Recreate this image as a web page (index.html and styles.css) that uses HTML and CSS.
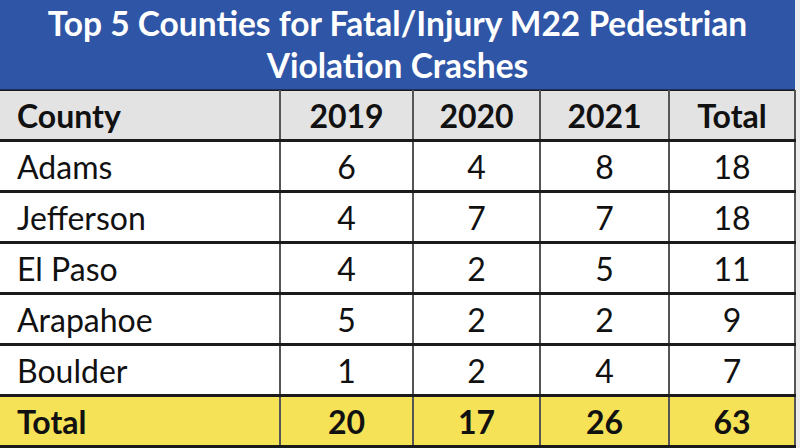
FILE: index.html
```html
<!DOCTYPE html>
<html>
<head>
<meta charset="utf-8">
<link rel="stylesheet" href="styles.css">
</head>
<body>
<div class="sheet">
  <div class="title">Top 5 Counties for Fatal/Injury M22 Pedestrian<br>Violation Crashes</div>
  <table class="grid">
    <colgroup>
      <col class="c-name"><col class="c-y1"><col class="c-y2"><col class="c-y3"><col class="c-tot">
    </colgroup>
    <thead>
      <tr class="head"><th class="name">County</th><th>2019</th><th>2020</th><th>2021</th><th>Total</th></tr>
    </thead>
    <tbody>
      <tr><td class="name">Adams</td><td>6</td><td>4</td><td>8</td><td>18</td></tr>
      <tr><td class="name">Jefferson</td><td>4</td><td>7</td><td>7</td><td>18</td></tr>
      <tr><td class="name">El Paso</td><td>4</td><td>2</td><td>5</td><td>11</td></tr>
      <tr><td class="name">Arapahoe</td><td>5</td><td>2</td><td>2</td><td>9</td></tr>
      <tr><td class="name">Boulder</td><td>1</td><td>2</td><td>4</td><td>7</td></tr>
      <tr class="total"><td class="name">Total</td><td>20</td><td>17</td><td>26</td><td>63</td></tr>
    </tbody>
  </table>
</div>
</body>
</html>
```
FILE: styles.css
```css
html, body {
  margin: 0;
  padding: 0;
  background: #ececec;
}
body {
  width: 800px;
  height: 448px;
  overflow: hidden;
  font-family: "Lato", "Open Sans", sans-serif;
}
.sheet {
  width: 795px;
  background: #ffffff;
}
.title {
  height: 90px;
  box-sizing: border-box;
  background: #2f55a6;
  color: #ffffff;
  font-weight: 700;
  font-size: 33.5px;
  line-height: 42px;
  text-align: center;
  padding-top: 2px;
  border-bottom: 1px solid #1d2f5a;
}
.grid {
  width: 795px;
  border-collapse: collapse;
  table-layout: fixed;
  font-size: 32px;
  color: #111;
}
.c-name { width: 280px; }
.c-y1 { width: 133px; }
.c-y2 { width: 127px; }
.c-y3 { width: 129px; }
.c-tot { width: 126px; }
.grid th, .grid td {
  height: 48px;
  padding: 0;
  text-align: center;
  border-left: 2px solid #555;
  border-right: 2px solid #555;
  border-bottom: 3px solid #1b1b1b;
}
.grid tr:first-child th { border-top: 1px solid #1b1b1b; }
.grid .name {
  text-align: left;
  padding-left: 17px;
  border-left: none;
}
.head th {
  background: #e3e3e3;
  font-weight: 700;
}
.total td {
  background: #f6e256;
  font-weight: 700;
  border-bottom: 3px solid #1b1b1b;
}
```
